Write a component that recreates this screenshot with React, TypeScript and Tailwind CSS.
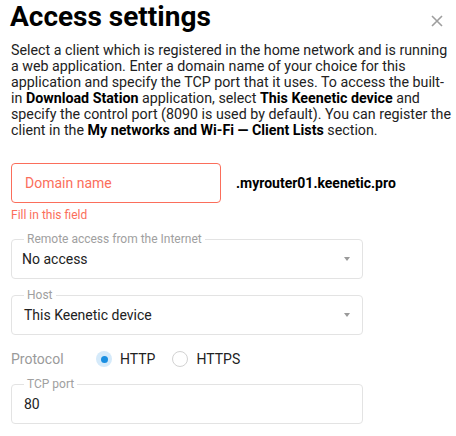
import { useState } from 'react';

function Outlined({ label, children, pl }: { label: string; children: React.ReactNode; pl: string }) {
  return (
    <div className={`relative h-[40px] w-[352px] rounded-[4px] border border-[#e3e3e3] flex items-center ${pl}`}>
      <span className="absolute -top-[8px] left-[12px] bg-white px-[3px] text-[12px] leading-[14px] text-[#a0a0a0]">
        {label}
      </span>
      {children}
    </div>
  );
}

function Caret() {
  return (
    <svg className="absolute right-[12px] top-[17px]" width="6" height="4" viewBox="0 0 6 4">
      <path d="M0 0h6L3 4z" fill="#9a9a9a" />
    </svg>
  );
}

function Radio({ checked, label, onClick }: { checked: boolean; label: string; onClick: () => void }) {
  return (
    <button onClick={onClick} className="flex items-center gap-[8px]">
      {checked ? (
        <span className="w-[16px] h-[16px] rounded-full bg-[#d5eafa] flex items-center justify-center">
          <span className="w-[7px] h-[7px] rounded-full bg-[#1a8ee1]" />
        </span>
      ) : (
        <span className="w-[16px] h-[16px] rounded-full border border-[#d2d2d2]" />
      )}
      <span className="text-[14px] leading-[20px] text-[#222]">{label}</span>
    </button>
  );
}

export default function App() {
  const [https, setHttps] = useState(false);

  return (
    <div className="w-[456px] h-[436px] bg-white overflow-hidden font-['Roboto',sans-serif] text-[#212121]">
      <div className="flex items-start justify-between pl-[10px] pr-[13px]">
        <h1 className="mt-[2px] text-[28px] leading-[30px] font-bold text-black">Access settings</h1>
        <button className="mt-[15px]">
          <svg width="12" height="12" viewBox="0 0 12 12" stroke="#9e9e9e" strokeWidth="1.6">
            <path d="M1 1l10 10M11 1L1 11" />
          </svg>
        </button>
      </div>

      <p className="mt-[10px] pl-[11px] whitespace-nowrap text-[14.25px] leading-[16px] text-[#222]">
        Select a client which is registered in the home network and is running
        <br />a web application. Enter a domain name of your choice for this
        <br />application and specify the TCP port that it uses. To access the built-
        <br />in <b className="font-bold text-black">Download Station</b> application, select{' '}
        <b className="font-bold text-black">This Keenetic device</b> and
        <br />specify the control port (8090 is used by default). You can register the
        <br />client in the <b className="font-bold text-black">My networks and Wi-Fi — Client Lists</b> section.
      </p>

      <div className="pl-[11px] mt-[25px]">
        <div className="flex items-center gap-[15px]">
          <div className="h-[40px] w-[210px] rounded-[4px] border border-[#fb6e5b] flex items-center pl-[13px]">
            <span className="text-[14px] text-[#fb6e5b]">Domain name</span>
          </div>
          <span className="text-[14px] font-bold text-black">.myrouter01.keenetic.pro</span>
        </div>
        <div className="mt-[4px] text-[12px] leading-[16px] text-[#fb6e5b]">Fill in this field</div>

        <div className="mt-[16px] flex flex-col gap-[16px]">
          <Outlined label="Remote access from the Internet" pl="pl-[10px]">
            <span className="text-[14px] text-[#222]">No access</span>
            <Caret />
          </Outlined>
          <Outlined label="Host" pl="pl-[12px]">
            <span className="text-[14px] text-[#222]">This Keenetic device</span>
            <Caret />
          </Outlined>
        </div>

        <div className="mt-[14px] h-[20px] flex items-center">
          <span className="w-[85px] text-[14px] text-[#9a9a9a]">Protocol</span>
          <div className="flex items-center gap-[17px]">
            <Radio checked={!https} label="HTTP" onClick={() => setHttps(false)} />
            <Radio checked={https} label="HTTPS" onClick={() => setHttps(true)} />
          </div>
        </div>

        <div className="mt-[15px]">
          <Outlined label="TCP port" pl="pl-[12px]">
            <span className="text-[14px] text-[#222]">80</span>
          </Outlined>
        </div>
      </div>
    </div>
  );
}
